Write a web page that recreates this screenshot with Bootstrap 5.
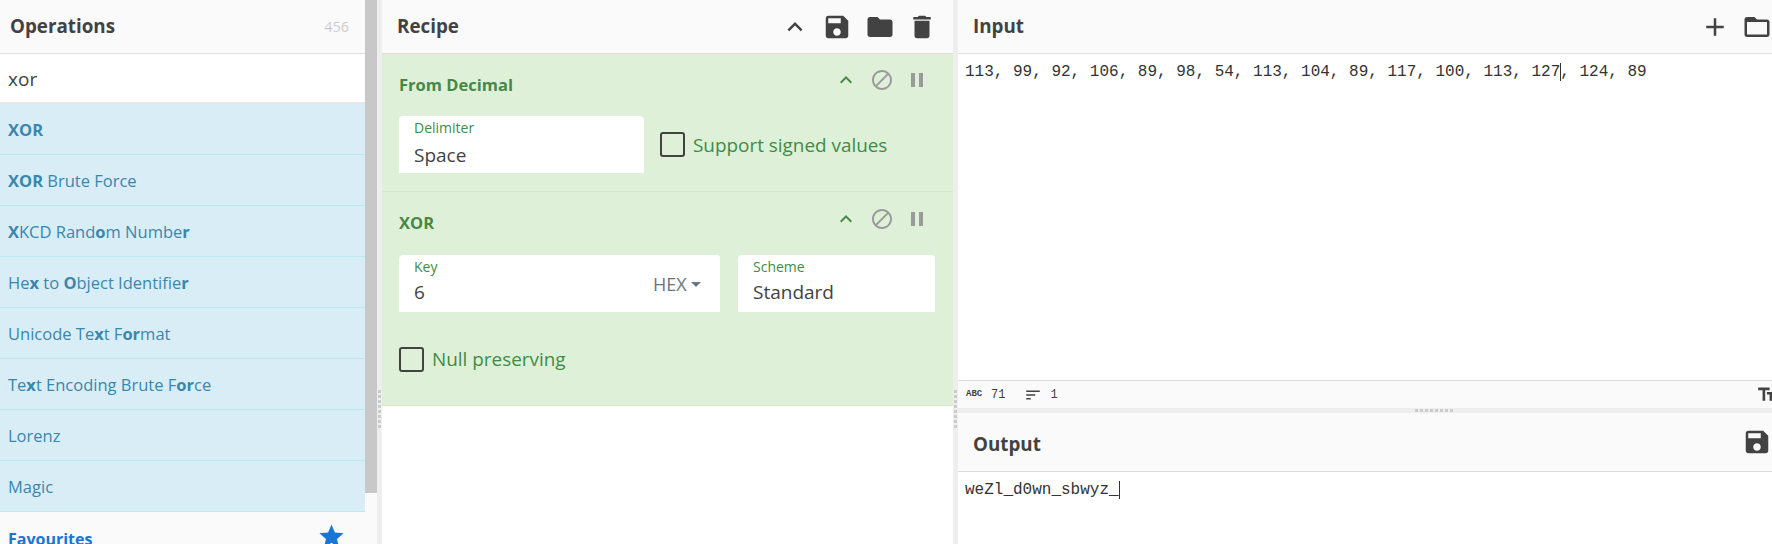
<!DOCTYPE html>
<html lang="en">
<head>
<meta charset="utf-8">
<title>CyberChef</title>
<link href="https://cdn.jsdelivr.net/npm/bootstrap@5.3.0/dist/css/bootstrap.min.css" rel="stylesheet">
<style>
html,body{height:544px;overflow:hidden;background:#fff}
body{font-family:"Open Sans","Noto Sans",sans-serif;color:#424242;width:1772px}
.shell{height:544px}
.flex-none{flex:none}
.opspane{width:365px}
.bar-head{height:54px;background:#fafafa;border-bottom:1px solid #ddd;flex:none}
.bar-title{font-size:18.8px;font-weight:700;color:#424242;line-height:1;margin-top:-1px;margin-left:-1px}
.opstitle{margin-left:2px}
.opcount{font-size:14.5px;color:#ccc}
.searchbox{height:50px;border-bottom:2px solid #e8e8e8;padding:2px 0 0 8px;font-size:19px;background:#fff;flex:none}
.oprow{height:51px;background:#d9edf7;border-bottom:1px solid #bce8f1;color:#3a87ad;font-size:16.5px;padding:3px 0 0 8px;flex:none}
.oprow b{font-weight:700}
.favbar{background:#fafafa;color:#1976d2;font-size:16px;font-weight:700;padding:0 19px 0 8px;height:52px;flex:none}
.favtext{margin-top:2px}
.favbar svg{width:29px;height:29px;fill:#1976d2;margin-top:-4px}
.scrolltrack{width:12px;background:#fafafa}
.scrollthumb{height:493px;background:#c8c8c8}
.vgut{width:5px;background:#eee;flex:none;position:relative}
.vgrip{position:absolute;left:1px;top:390px;width:3px;height:39px;background:repeating-linear-gradient(#ccc 0 3px,transparent 3px 5px)}
.recipepane{width:571px;flex:none}
.hicon{width:30px;height:30px;fill:#424242;display:block}
.hbtns{gap:12.5px}
.opcard{background:#dff0d8;border-bottom:1px solid #d6e9c6;padding:0 18px 0 17px;flex:none}
.card-a{height:138px}
.card-b{height:214px}
.optop{height:62px}
.card-b .optop{height:63px}
.optitle{font-size:16.5px;font-weight:700;color:#468847}
.opbtns{gap:11.5px;margin-top:-10px;margin-right:6px}
.opbtns svg{width:24px;height:24px;display:block;fill:#9a9a9a}
.opbtns svg.chev{fill:#468847}
.fieldbox{background:#fff;border-radius:4px 4px 0 0;height:57px;padding:3px 15px 0;position:relative}
.fieldlabel{font-size:14px;color:#3f8c45;line-height:18px}
.fieldval{font-size:19px;color:#424242;line-height:26px;margin-top:5px}
.keybox .fieldval,.schemebox .fieldval{margin-top:3px}
.cks{width:25px;height:25px;border:2px solid #424242;border-radius:3px;flex:none}
.cklabel{font-size:18.9px;color:#3f8c45;line-height:25px;padding-top:2px}
.nullrow .cklabel{padding-top:0}
.hexdrop{position:absolute;right:0;top:0;height:56px;width:87px;background:#fff;border-radius:0 4px 4px 4px;padding-left:20px;color:#6c757d;font-size:18px;padding-top:3px}
.caretmark{width:0;height:0;border-top:5px solid #6c757d;border-left:5px solid transparent;border-right:5px solid transparent;margin-left:4px}
.iopane{flex:1;min-width:0}
.iotext{font-family:"Liberation Mono","DejaVu Sans Mono",monospace;font-size:16px;color:#333;padding:8px 7px;line-height:20px;white-space:pre}
.inbody{height:326px;flex:none}
.cursor-mark{border-left:1px solid #333;margin-right:-1px}
.statusbar{height:28px;background:#fafafa;border-top:1px solid #ddd;flex:none;font-family:"Liberation Mono","DejaVu Sans Mono",monospace;font-size:12px;color:#424242;padding-left:8px;overflow:hidden}
.abc{font-size:9px;font-weight:700;width:21px}
.statusbar svg{width:18px;height:18px;fill:#424242;flex:none}
.hgut{height:5px;background:#eee;flex:none;position:relative}
.hgrip{position:absolute;left:457px;top:1px;width:40px;height:3px;background:repeating-linear-gradient(90deg,#ccc 0 3px,transparent 3px 5px)}
.outhead{height:59px}
.outhead .bar-title{margin-top:4px}
.w-245{width:245px}
.keyrow{gap:18px}
.keybox{width:321px}
.schemebox{width:197px}
.nullrow{margin-top:35px}
.ioheadpad{padding-right:0}
.iobtns{gap:12px}
.statlines{margin-left:19px}
.statusbar .ttic{width:21px;height:21px;margin-right:-5px}
</style>
</head>
<body>
<div class="shell d-flex">
  <div class="opspane d-flex flex-column overflow-hidden flex-none">
    <div class="bar-head d-flex align-items-center justify-content-between ps-2 pe-3">
      <span class="bar-title opstitle">Operations</span><span class="opcount">456</span>
    </div>
    <div class="searchbox d-flex align-items-center">xor</div>
    <div class="oprow d-flex align-items-center"><span><b>XOR</b></span></div>
    <div class="oprow d-flex align-items-center"><span><b>XOR</b> Brute Force</span></div>
    <div class="oprow d-flex align-items-center"><span><b>X</b>KCD Rand<b>o</b>m Numbe<b>r</b></span></div>
    <div class="oprow d-flex align-items-center"><span>He<b>x</b> to <b>O</b>bject Identifie<b>r</b></span></div>
    <div class="oprow d-flex align-items-center"><span>Unicode Te<b>x</b>t F<b>or</b>mat</span></div>
    <div class="oprow d-flex align-items-center"><span>Te<b>x</b>t Encoding Brute F<b>or</b>ce</span></div>
    <div class="oprow d-flex align-items-center"><span>Lorenz</span></div>
    <div class="oprow d-flex align-items-center"><span>Magic</span></div>
    <div class="favbar d-flex align-items-center justify-content-between"><span class="favtext">Favourites</span>
      <svg viewBox="0 0 24 24"><path d="M12 17.27L18.18 21l-1.64-7.03L22 9.24l-7.19-.61L12 2 9.19 8.63 2 9.24l5.46 4.73L5.82 21z"/></svg>
    </div>
  </div>
  <div class="scrolltrack flex-none"><div class="scrollthumb"></div></div>
  <div class="vgut"><div class="vgrip"></div></div>

  <div class="recipepane d-flex flex-column">
    <div class="bar-head d-flex align-items-center justify-content-between ps-3 pe-3">
      <span class="bar-title">Recipe</span>
      <div class="hbtns d-flex align-items-center">
        <svg class="hicon" viewBox="0 0 24 24"><path d="M7.41 15.41L12 10.83l4.59 4.58L18 14l-6-6-6 6z"/></svg>
        <svg class="hicon" viewBox="0 0 24 24"><path d="M17 3H5c-1.11 0-2 .9-2 2v14c0 1.1.89 2 2 2h14c1.1 0 2-.9 2-2V7l-4-4zm-5 16c-1.66 0-3-1.34-3-3s1.34-3 3-3 3 1.34 3 3-1.34 3-3 3zm3-10H5V5h10v4z"/></svg>
        <svg class="hicon" viewBox="0 0 24 24"><path d="M10 4H4c-1.1 0-1.99.9-1.99 2L2 18c0 1.1.9 2 2 2h16c1.1 0 2-.9 2-2V8c0-1.1-.9-2-2-2h-8l-2-2z"/></svg>
        <svg class="hicon" viewBox="0 0 24 24"><path d="M6 19c0 1.1.9 2 2 2h8c1.1 0 2-.9 2-2V7H6v12zM19 4h-3.5l-1-1h-5l-1 1H5v2h14V4z"/></svg>
      </div>
    </div>
    <div class="opcard card-a">
      <div class="optop d-flex align-items-center justify-content-between">
        <span class="optitle">From Decimal</span>
        <div class="opbtns d-flex">
          <svg class="chev" viewBox="0 0 24 24"><path d="M7.41 15.41L12 10.83l4.59 4.58L18 14l-6-6-6 6z"/></svg>
          <svg viewBox="0 0 24 24"><path d="M12 2C6.48 2 2 6.48 2 12s4.48 10 10 10 10-4.48 10-10S17.52 2 12 2zM4 12c0-4.42 3.58-8 8-8 1.85 0 3.55.63 4.9 1.69L5.69 16.9C4.63 15.55 4 13.85 4 12zm8 8c-1.85 0-3.55-.63-4.9-1.69L18.31 7.1C19.37 8.45 20 10.15 20 12c0 4.42-3.58 8-8 8z"/></svg>
          <svg viewBox="0 0 24 24"><path d="M6 19h4V5H6v14zm8-14v14h4V5h-4z"/></svg>
        </div>
      </div>
      <div class="d-flex align-items-center gap-3">
        <div class="fieldbox flex-none w-245"><div class="fieldlabel">Delimiter</div><div class="fieldval">Space</div></div>
        <div class="d-flex align-items-center gap-2"><span class="cks"></span><span class="cklabel">Support signed values</span></div>
      </div>
    </div>
    <div class="opcard card-b">
      <div class="optop d-flex align-items-center justify-content-between">
        <span class="optitle">XOR</span>
        <div class="opbtns d-flex">
          <svg class="chev" viewBox="0 0 24 24"><path d="M7.41 15.41L12 10.83l4.59 4.58L18 14l-6-6-6 6z"/></svg>
          <svg viewBox="0 0 24 24"><path d="M12 2C6.48 2 2 6.48 2 12s4.48 10 10 10 10-4.48 10-10S17.52 2 12 2zM4 12c0-4.42 3.58-8 8-8 1.85 0 3.55.63 4.9 1.69L5.69 16.9C4.63 15.55 4 13.85 4 12zm8 8c-1.85 0-3.55-.63-4.9-1.69L18.31 7.1C19.37 8.45 20 10.15 20 12c0 4.42-3.58 8-8 8z"/></svg>
          <svg viewBox="0 0 24 24"><path d="M6 19h4V5H6v14zm8-14v14h4V5h-4z"/></svg>
        </div>
      </div>
      <div class="d-flex keyrow">
        <div class="fieldbox keybox"><div class="fieldlabel">Key</div><div class="fieldval">6</div>
          <div class="hexdrop d-flex align-items-center">HEX<span class="caretmark"></span></div>
        </div>
        <div class="fieldbox schemebox"><div class="fieldlabel">Scheme</div><div class="fieldval">Standard</div></div>
      </div>
      <div class="d-flex align-items-center gap-2 nullrow"><span class="cks"></span><span class="cklabel">Null preserving</span></div>
    </div>
  </div>
  <div class="vgut"><div class="vgrip"></div></div>

  <div class="iopane d-flex flex-column">
    <div class="bar-head d-flex align-items-center justify-content-between ps-3 ioheadpad">
      <span class="bar-title">Input</span>
      <div class="d-flex align-items-center iobtns">
        <svg class="hicon" viewBox="0 0 24 24"><path d="M19 13h-6v6h-2v-6H5v-2h6V5h2v6h6v2z"/></svg>
        <svg class="hicon" viewBox="0 0 24 24"><path d="M20 6h-8l-2-2H4c-1.1 0-1.99.9-1.99 2L2 18c0 1.1.9 2 2 2h16c1.1 0 2-.9 2-2V8c0-1.1-.9-2-2-2zm0 12H4V8h16v10z"/></svg>
      </div>
    </div>
    <div class="inbody iotext">113, 99, 92, 106, 89, 98, 54, 113, 104, 89, 117, 100, 113, 127<span class="cursor-mark"></span>, 124, 89</div>
    <div class="statusbar d-flex align-items-center">
      <span class="abc">ABC</span><span class="ms-1">71</span>
      <svg class="statlines" viewBox="0 0 24 24"><path d="M3 18h6v-2H3v2zM3 6v2h18V6H3zm0 7h12v-2H3v2z"/></svg><span class="ms-2">1</span>
      <svg class="ttic ms-auto" viewBox="0 0 24 24"><path d="M2.5 4v3h5v12h3V7h5V4h-13zm19 5h-9v3h3v7h3v-7h3V9z"/></svg>
    </div>
    <div class="hgut"><div class="hgrip"></div></div>
    <div class="bar-head outhead d-flex align-items-center justify-content-between ps-3 ioheadpad">
      <span class="bar-title">Output</span>
      <svg class="hicon" viewBox="0 0 24 24"><path d="M17 3H5c-1.11 0-2 .9-2 2v14c0 1.1.89 2 2 2h14c1.1 0 2-.9 2-2V7l-4-4zm-5 16c-1.66 0-3-1.34-3-3s1.34-3 3-3 3 1.34 3 3-1.34 3-3 3zm3-10H5V5h10v4z"/></svg>
    </div>
    <div class="iotext outbody">weZl_d0wn_sbwyz_<span class="cursor-mark"></span></div>
  </div>
</div>
<script src="https://cdn.jsdelivr.net/npm/bootstrap@5.3.0/dist/js/bootstrap.bundle.min.js"></script>
</body>
</html>
